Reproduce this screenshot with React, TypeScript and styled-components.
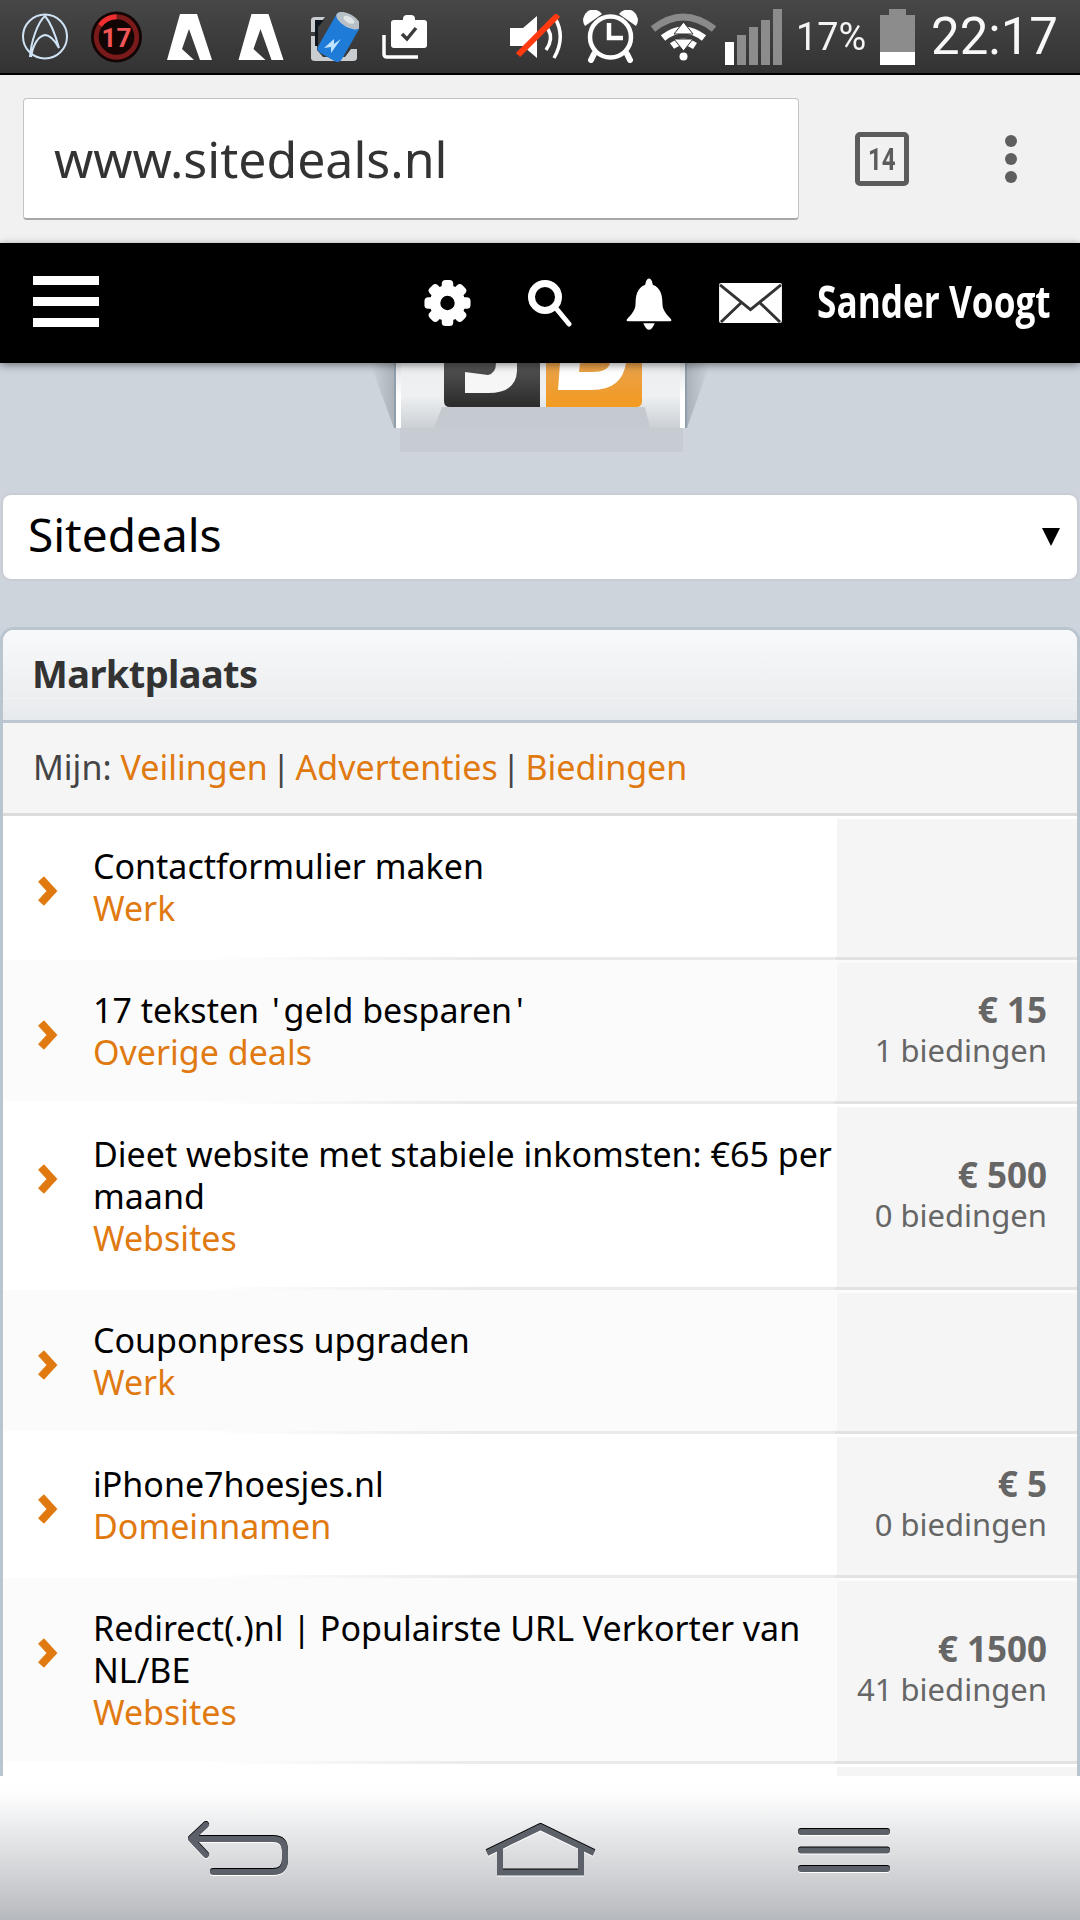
import React from "react";
import styled, { createGlobalStyle } from "styled-components";

const Global = createGlobalStyle`
  html, body { margin: 0; padding: 0; }
  body { background: #cdd4dc; font-family: "Noto Sans", "Open Sans", sans-serif; }
  * { box-sizing: border-box; }
`;

const Screen = styled.div`
  width: 1080px;
  height: 1920px;
  display: flex;
  flex-direction: column;
  overflow: hidden;
`;

const StatusBar = styled.div`
  height: 75px;
  flex: none;
  display: flex;
  align-items: center;
  padding-left: 22px;
  background: linear-gradient(#474747, #333333);
  border-bottom: 2px solid #000;
`;

const StatusIcon = styled.svg<{ $ml: number }>`
  flex: none;
  display: block;
  margin-left: ${(p) => p.$ml}px;
`;

const Percent = styled.span`
  flex: none;
  width: 70px;
  margin-left: 14px;
  font: 400 39px "Roboto", sans-serif;
  color: #f4f4f4;
  white-space: nowrap;
  transform: scaleX(0.97);
  transform-origin: left center;
`;

const Clock = styled.span`
  flex: none;
  margin-left: 16px;
  font: 400 51px "Roboto", sans-serif;
  color: #f8f8f8;
`;

const ChromeBar = styled.div`
  height: 168px;
  flex: none;
  display: flex;
  align-items: center;
  padding-left: 23px;
  background: #f1f1f1;
`;

const UrlBox = styled.div`
  width: 776px;
  height: 122px;
  display: flex;
  align-items: center;
  padding-left: 30px;
  background: #fff;
  border: 1px solid #c4c4c4;
  border-bottom: 2px solid #a8a8a8;
  border-radius: 4px;
  font-size: 50px;
  color: #333;
`;

const TabCount = styled.div`
  width: 54px;
  height: 54px;
  margin-left: 56px;
  display: flex;
  align-items: center;
  justify-content: center;
  border: 5px solid #5c5c5c;
  border-radius: 5px;
  font: 700 31px "Roboto", sans-serif;
  color: #5c5c5c;
`;

const TabDigits = styled.span`
  display: block;
  transform: scaleX(0.78);
`;

const Dots = styled.div`
  margin-left: 96px;
  display: flex;
  flex-direction: column;
  gap: 6px;
`;

const Dot = styled.i`
  display: block;
  width: 12px;
  height: 12px;
  border-radius: 50%;
  background: #5f5f5f;
`;

const TopBar = styled.div`
  position: relative;
  z-index: 2;
  height: 120px;
  flex: none;
  display: flex;
  align-items: center;
  padding: 0 31px 0 33px;
  background: #000;
  box-shadow: 0 2px 8px rgba(0, 0, 0, 0.45);
`;

const Burger = styled.div`
  width: 66px;
  display: flex;
  flex-direction: column;
  gap: 11.5px;
  margin: -3px auto 0 0;
`;

const BurgerLine = styled.i`
  display: block;
  height: 9.5px;
  background: #fff;
`;

const TopIcon = styled.svg<{ $mr: number }>`
  display: block;
  flex: none;
  margin-right: ${(p) => p.$mr}px;
`;

const UserName = styled.span`
  flex: none;
  width: 232px;
  margin-top: -4px;
  font: 700 44px "Open Sans", sans-serif;
  color: #fff;
  white-space: nowrap;
  transform: scaleX(0.8);
  transform-origin: left center;
`;

const Main = styled.div`
  flex: 1;
  min-height: 0;
  overflow: hidden;
  background: #cdd4dc;
`;

const LogoArea = styled.div`
  height: 132px;
  display: flex;
  justify-content: center;
`;

const LogoGraphic = styled.svg`
  display: block;
`;

const SelectBox = styled.div`
  height: 84px;
  margin: 0 3px;
  padding: 0 17px 6px 25px;
  display: flex;
  align-items: center;
  justify-content: space-between;
  background: #fff;
  border-radius: 8px;
  box-shadow: 0 0 0 2px #c9ccd2;
  font-size: 46px;
  color: #000;
`;

const SelectArrow = styled.span`
  width: 0;
  height: 0;
  margin-bottom: -6px;
  border-left: 9px solid transparent;
  border-right: 9px solid transparent;
  border-top: 18px solid #000;
`;

const Panel = styled.section`
  margin-top: 48px;
  background: #fff;
  border: 3px solid #b9c5cf;
  border-bottom: 0;
  border-radius: 14px 14px 0 0;
`;

const PanelHead = styled.div`
  height: 93px;
  display: flex;
  align-items: center;
  padding: 0 29px 4px;
  border-bottom: 3px solid #bcc7d1;
  border-radius: 11px 11px 0 0;
  background: linear-gradient(#f8f9fa 0%, #eceef0 75%, #f5f6f7 75.5%, #eceef0 77%, #e7eaed 100%);
  font-size: 38px;
  font-weight: 700;
  color: #333;
  letter-spacing: -0.6px;
`;

const SubBar = styled.div`
  height: 93px;
  display: flex;
  align-items: center;
  padding: 0 30px 2px;
  background: #f5f5f6;
  border-bottom: 3px solid #dcdcdc;
  font-size: 34px;
  color: #444;
  white-space: pre;
`;

const Orange = styled.span`
  color: #e07a10;
`;

const Lead = styled.span`
  margin-right: 9px;
`;

const Sep = styled.span`
  margin: 0 5px 0 4px;
`;

const Row = styled.div<{ $odd: boolean }>`
  display: flex;
  min-height: 40px;
  background: ${(p) => (p.$odd ? "#fff" : "#fbfbfb")};
  border-bottom: 3px solid;
  border-image: linear-gradient(90deg, #fff 0%, #fff 19%, #eaeaea 45%, #eaeaea 77.4%, #e2e2e2 77.4%, #e2e2e2 100%) 1;
`;

const Chevron = styled.svg`
  flex: none;
  display: block;
  margin: 60px 35px 0 35px;
  align-self: flex-start;
`;

const RowBody = styled.div`
  flex: 1;
  min-width: 0;
  padding: 29px 0 28px;
  white-space: nowrap;
`;

const RowTitle = styled.div`
  font-size: 34px;
  line-height: 42px;
  color: #000;
`;

const Quote = styled.span`
  padding: 0 4px;
`;

const RowCat = styled.div`
  font-size: 34px;
  line-height: 42px;
  color: #e07a10;
`;

const RowSide = styled.div`
  flex: none;
  width: 240px;
  margin-top: 3px;
  padding: 0 30px 3px 0;
  display: flex;
  flex-direction: column;
  align-items: flex-end;
  justify-content: center;
  background: #f5f5f5;
`;

const Price = styled.div`
  font-size: 35px;
  line-height: 40px;
  font-weight: 700;
  color: #666;
`;

const Bids = styled.div`
  font-size: 31px;
  line-height: 41px;
  color: #666;
`;

const NavBar = styled.nav`
  height: 144px;
  flex: none;
  display: flex;
  align-items: flex-start;
  padding-left: 186px;
  background: linear-gradient(#ffffff 0%, #fdfdfd 12%, #e6e7e9 42%, #c9cbce 78%, #b6b9be 100%);
`;

const NavIcon = styled.svg<{ $ml: number; $mt: number }>`
  display: block;
  flex: none;
  margin: ${(p) => p.$mt}px 0 0 ${(p) => p.$ml}px;
  overflow: visible;
  filter: drop-shadow(0 -1px 0 #000) drop-shadow(0 1px 0 #fff);
`;

type Item = { title: string[]; cat: string; price?: string; bids?: string };

const items: Item[] = [
  { title: ["Contactformulier maken"], cat: "Werk" },
  { title: ["17 teksten 'geld besparen'"], cat: "Overige deals", price: "€ 15", bids: "1 biedingen" },
  { title: ["Dieet website met stabiele inkomsten: €65 per", "maand"], cat: "Websites", price: "€ 500", bids: "0 biedingen" },
  { title: ["Couponpress upgraden"], cat: "Werk" },
  { title: ["iPhone7hoesjes.nl"], cat: "Domeinnamen", price: "€ 5", bids: "0 biedingen" },
  { title: ["Redirect(.)nl | Populairste URL Verkorter van", "NL/BE"], cat: "Websites", price: "€ 1500", bids: "41 biedingen" },
];

const gearTeeth = [0, 45, 90, 135, 180, 225, 270, 315];

function TitleText({ text }: { text: string }) {
  const parts = text.split("'");
  return (
    <>
      {parts.map((part, i) => (
        <React.Fragment key={i}>
          {i > 0 && <Quote>'</Quote>}
          {part}
        </React.Fragment>
      ))}
    </>
  );
}

const ArchMark = () => (
  <path fill="#fff" d="M13 0 H30 L45 46 H33 L22 15 L15 35 L27 46 H0 Z" />
);

export default function App() {
  return (
    <Screen>
      <Global />
      <StatusBar>
        <StatusIcon $ml={0} width="46" height="47" viewBox="0 0 46 47" fill="none" stroke="#cfe3f5" strokeWidth="2">
          <circle cx="23" cy="23.5" r="22" />
          <path d="M8 44 C9 28 16 9 23 3 C29 10 34 24 37 35 C33 27 27 22 23 22 C16 23 11 32 9 44" />
        </StatusIcon>
        <StatusIcon $ml={22} width="53" height="52" viewBox="0 0 54 54">
          <circle cx="27" cy="27" r="26.5" fill="#140505" />
          <circle cx="27" cy="27" r="21" fill="none" stroke="#7a1a1a" strokeWidth="5" />
          <path d="M27 6 A21 21 0 0 0 10 15" fill="none" stroke="#f03030" strokeWidth="5" />
          <text x="27" y="37" textAnchor="middle" fontFamily="Roboto, sans-serif" fontWeight="700" fontSize="27" fill="#f25555">17</text>
        </StatusIcon>
        <StatusIcon $ml={24} width="45" height="46" viewBox="0 0 45 46">
          <ArchMark />
        </StatusIcon>
        <StatusIcon $ml={26} width="46" height="46" viewBox="0 0 45 46">
          <ArchMark />
        </StatusIcon>
        <StatusIcon $ml={25} width="50" height="50" viewBox="0 0 50 50">
          <path d="M2 8 Q2 5 6 5 H16 L8 15 V20 H2 Z M2 24 H8 V38 L14 45 H36 L42 37 H48 V46 Q48 49 44 49 H6 Q2 49 2 46 Z" fill="#c9cdd0" />
          <path d="M6 8 H15 L9 15 V34 H6 Z" fill="#0e1620" />
          <g transform="rotate(30 30 24)">
            <rect x="17" y="2" width="27" height="46" rx="5" fill="#1f7bd8" />
            <ellipse cx="30.5" cy="6" rx="13.5" ry="6.5" fill="#b7c0c6" />
            <ellipse cx="30.5" cy="5" rx="6" ry="3" fill="#dfe4e6" />
          </g>
          <path d="M15 36 L25 27 L25 32 L32 27 L22 41 L22 35 Z" fill="#bfe3ff" />
        </StatusIcon>
        <StatusIcon $ml={23} width="46" height="44" viewBox="0 0 46 44">
          <path d="M2 20 V39 Q2 42 5 42 H36" fill="none" stroke="#fff" strokeWidth="3.5" />
          <path d="M21 5 V4 Q21 0 25 0 H29 Q33 0 33 4 V5 H42 Q45 5 45 8 V30 Q45 33 42 33 H12 Q9 33 9 30 V8 Q9 5 12 5 Z" fill="#fff" />
          <path d="M20 19 L25 24 L34 13" fill="none" stroke="#3c3c3c" strokeWidth="3.5" />
        </StatusIcon>
        <StatusIcon $ml={82} width="57" height="45" viewBox="0 0 57 45">
          <path d="M0 14 H13 L27 2 V44 L13 32 H0 Z" fill="#fff" />
          <path d="M38 15 Q44 25 36 36" fill="none" stroke="#fff" strokeWidth="3.5" />
          <path d="M45 4 Q56 23 44 44" fill="none" stroke="#fff" strokeWidth="3.5" />
          <path d="M8 41 L48 1" stroke="#ff3a10" strokeWidth="6" />
        </StatusIcon>
        <StatusIcon $ml={16} width="55" height="53" viewBox="0 0 55 53" fill="none">
          <path d="M2 16 A10 10 0 0 1 19 4 Z M53 16 A10 10 0 0 0 36 4 Z" fill="#fff" />
          <circle cx="27.5" cy="27" r="20.5" stroke="#fff" strokeWidth="4.5" />
          <path d="M26 13 V28 H40" stroke="#fff" strokeWidth="4.5" />
          <path d="M11 44 L8 50 M44 44 L47 50" stroke="#fff" strokeWidth="6" strokeLinecap="round" />
        </StatusIcon>
        <StatusIcon $ml={13} width="65" height="48" viewBox="0 0 65 48" fill="none">
          <path d="M2 16 Q32 -8 63 16" stroke="#8a8a8a" strokeWidth="7" />
          <path d="M12 25 Q32 9 53 25" stroke="#fff" strokeWidth="7" />
          <path d="M21 33 Q32 25 44 33" stroke="#fff" strokeWidth="7" />
          <circle cx="32.5" cy="43.5" r="4" fill="#fff" />
          <path d="M32.5 9 L42 21 H23 Z" fill="#fff" stroke="#333" strokeWidth="1" />
          <path d="M32.5 38 L42 26 H23 Z" fill="#fff" stroke="#333" strokeWidth="1" />
        </StatusIcon>
        <StatusIcon $ml={9} width="57" height="56" viewBox="0 0 57 56">
          <rect x="0" y="33" width="9" height="23" fill="#fff" />
          <rect x="12" y="26" width="9" height="30" fill="#8c8c8c" />
          <rect x="24" y="18" width="9" height="38" fill="#8c8c8c" />
          <rect x="36" y="11" width="9" height="45" fill="#8c8c8c" />
          <rect x="48" y="0" width="9" height="56" fill="#8c8c8c" />
        </StatusIcon>
        <Percent>17%</Percent>
        <StatusIcon $ml={14} width="35" height="56" viewBox="0 0 35 56">
          <path d="M9 0 H26 V6 H35 V43 H0 V6 H9 Z" fill="#8c8c8c" />
          <rect x="0" y="43" width="35" height="13" fill="#fff" />
        </StatusIcon>
        <Clock>22:17</Clock>
      </StatusBar>

      <ChromeBar>
        <UrlBox>www.sitedeals.nl</UrlBox>
        <TabCount>
          <TabDigits>14</TabDigits>
        </TabCount>
        <Dots>
          <Dot />
          <Dot />
          <Dot />
        </Dots>
      </ChromeBar>

      <TopBar>
        <Burger>
          <BurgerLine />
          <BurgerLine />
          <BurgerLine />
        </Burger>
        <TopIcon $mr={55} width="49" height="48" viewBox="0 0 50 50">
          <g fill="#fff">
            {gearTeeth.map((a) => (
              <rect key={a} x="19" y="1" width="12" height="12" rx="4" transform={`rotate(${a} 25 25)`} />
            ))}
          </g>
          <circle cx="25" cy="25" r="13" fill="none" stroke="#fff" strokeWidth="11" />
        </TopIcon>
        <TopIcon $mr={53} width="46" height="48" viewBox="0 0 46 48" fill="none" stroke="#fff">
          <circle cx="18" cy="18" r="13.5" strokeWidth="7" />
          <path d="M28 28 L42 45" strokeWidth="5" strokeLinecap="round" />
        </TopIcon>
        <TopIcon $mr={45} width="46" height="54" viewBox="0 0 48 56">
          <path d="M21 5 Q24 0 27 5 L28 9 C36 12 38 20 38 28 C38 36 42 39 47 45 Q48 47 46 47 H2 Q0 47 1 45 C6 39 10 36 10 28 C10 20 12 12 20 9 Z" fill="#fff" />
          <path d="M18 49 H30 Q27 56 24 56 Q21 56 18 49 Z" fill="#fff" />
        </TopIcon>
        <TopIcon $mr={33} width="67" height="40" viewBox="0 0 66 42">
          <rect width="66" height="42" rx="2" fill="#fff" />
          <path d="M1 2 L33 28 L65 2 M2 41 L24 20 M64 41 L42 20" fill="none" stroke="#333" strokeWidth="3" />
        </TopIcon>
        <UserName>Sander Voogt</UserName>
      </TopBar>

      <Main>
        <LogoArea>
          <LogoGraphic width="340" height="90" viewBox="0 0 340 90">
            <defs>
              <linearGradient id="logoBody" x1="0" y1="0" x2="0" y2="1">
                <stop offset="0" stopColor="#eceef0" />
                <stop offset="0.5" stopColor="#eef0f1" />
                <stop offset="1" stopColor="#cbd0d5" />
              </linearGradient>
              <linearGradient id="logoStrip" x1="0" y1="0" x2="0" y2="1">
                <stop offset="0" stopColor="#dfe2e5" />
                <stop offset="0.5" stopColor="#ffffff" />
                <stop offset="1" stopColor="#ffffff" />
              </linearGradient>
              <linearGradient id="logoDark" x1="0" y1="0" x2="0" y2="1">
                <stop offset="0" stopColor="#555" />
                <stop offset="1" stopColor="#2b2b2b" />
              </linearGradient>
              <linearGradient id="logoOrange" x1="0" y1="0" x2="0" y2="1">
                <stop offset="0" stopColor="#e8a24c" />
                <stop offset="1" stopColor="#f39a20" />
              </linearGradient>
              <linearGradient id="logoWingL" x1="0" y1="0" x2="1" y2="0">
                <stop offset="0" stopColor="#cdd4dc" />
                <stop offset="1" stopColor="#aab1b8" />
              </linearGradient>
              <linearGradient id="logoWingR" x1="1" y1="0" x2="0" y2="0">
                <stop offset="0" stopColor="#cdd4dc" />
                <stop offset="1" stopColor="#aab1b8" />
              </linearGradient>
            </defs>
            <path d="M0 0 H24 V65 Z" fill="url(#logoWingL)" />
            <path d="M340 0 H317 V65 Z" fill="url(#logoWingR)" />
            <rect x="30" y="65" width="283" height="24" fill="#c6ccd1" />
            <rect x="24" y="0" width="293" height="65" fill="url(#logoBody)" />
            <rect x="24" y="0" width="2" height="65" fill="#8f9eab" />
            <rect x="26" y="0" width="5" height="65" fill="url(#logoStrip)" />
            <rect x="310" y="0" width="5" height="65" fill="url(#logoStrip)" />
            <rect x="315" y="0" width="2" height="65" fill="#8f9eab" />
            <path d="M72 44 H275 L280 65 H64 Z" fill="#c4cacf" />
            <path d="M74 0 H170 V44 H80 Q74 44 74 38 Z" fill="url(#logoDark)" />
            <path d="M176 0 H272 V38 Q272 44 266 44 H176 Z" fill="url(#logoOrange)" />
            <path d="M95 9 L118 12 Q126 10 126 0 H147 V8 Q146 30 118 30 H95 Z" fill="#f6f6f6" />
            <path fillRule="evenodd" d="M190 0 H256 Q252 27 222 27 H188 Z M210 0 H240 Q238 9 222 9 H209 Z" fill="#fff" />
          </LogoGraphic>
        </LogoArea>

        <SelectBox>
          Sitedeals
          <SelectArrow />
        </SelectBox>

        <Panel>
          <PanelHead>Marktplaats</PanelHead>
          <SubBar>
            <Lead>Mijn:</Lead>
            <Orange>Veilingen</Orange>
            <Sep>|</Sep>
            <Orange>Advertenties</Orange>
            <Sep>|</Sep>
            <Orange>Biedingen</Orange>
          </SubBar>
          {items.map((it, i) => (
            <Row key={i} $odd={i % 2 === 0}>
              <Chevron width="20" height="30" viewBox="0 0 20 30">
                <path d="M3 3 L14 15 L3 27" fill="none" stroke="#e07a10" strokeWidth="8" />
              </Chevron>
              <RowBody>
                {it.title.map((line) => (
                  <RowTitle key={line}>
                    <TitleText text={line} />
                  </RowTitle>
                ))}
                <RowCat>{it.cat}</RowCat>
              </RowBody>
              <RowSide>
                {it.price && <Price>{it.price}</Price>}
                {it.bids && <Bids>{it.bids}</Bids>}
              </RowSide>
            </Row>
          ))}
          <Row $odd={true}>
            <RowBody />
            <RowSide />
          </Row>
        </Panel>
      </Main>

      <NavBar>
        <NavIcon $ml={0} $mt={46} width="104" height="56" viewBox="0 0 104 56" fill="none">
          <path d="M20 3 L5 17 L20 33 M6 17 H87 Q99 17 99 29 V38 Q99 50 87 50 H27" stroke="#5c6069" strokeWidth="6" strokeLinejoin="round" strokeLinecap="round" />
        </NavIcon>
        <NavIcon $ml={194} $mt={48} width="113" height="52" viewBox="0 0 113 52" fill="none">
          <path d="M3 29 L56.5 3 L110 29" stroke="#5c6069" strokeWidth="6" strokeLinejoin="round" />
          <path d="M16 23 V48.5 H97 V23" stroke="#5c6069" strokeWidth="6" />
        </NavIcon>
        <NavIcon $ml={200} $mt={52} width="94" height="45" viewBox="0 0 94 45" fill="none">
          <path d="M4 4 H90 M4 22.5 H90 M4 41 H90" stroke="#5c6069" strokeWidth="6" strokeLinecap="round" />
        </NavIcon>
      </NavBar>
    </Screen>
  );
}
